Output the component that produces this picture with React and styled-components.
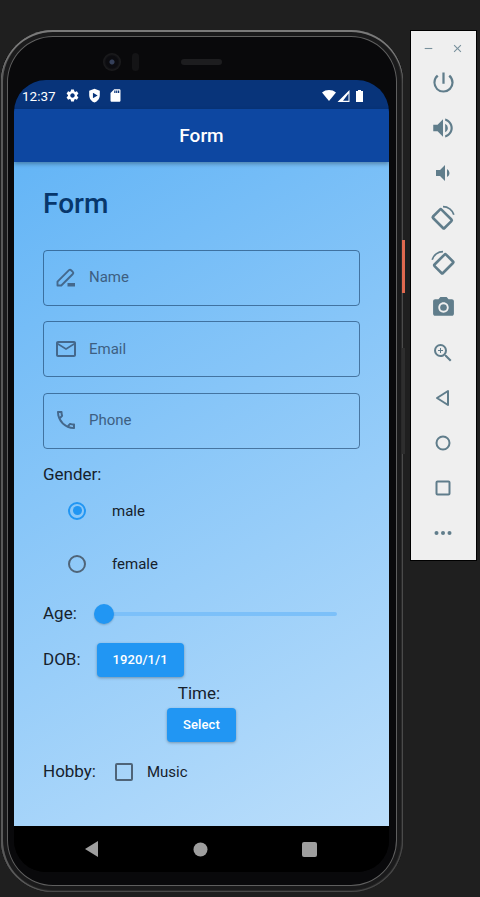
import React from 'react'
import styled, { createGlobalStyle } from 'styled-components'
import {
  MdSettings, MdSdCard, MdMailOutline, MdOutlinePhone,
  MdPowerSettingsNew, MdVolumeUp, MdVolumeDown,
  MdPhotoCamera, MdOutlineZoomIn, MdClose, MdRemove,
} from 'react-icons/md'

const Global = createGlobalStyle`
  html, body { margin: 0; padding: 0; background: #1f1f1f; }
  body { width: 480px; height: 897px; overflow: hidden; font-family: Roboto, sans-serif; }
  * { box-sizing: border-box; }
`

const Page = styled.div`
  display: flex;
  align-items: flex-start;
  width: 480px;
  height: 897px;
  padding: 30px 0 0 1px;
  background: #1f1f1f;
`

const Phone = styled.div`
  position: relative;
  display: flex;
  flex-direction: column;
  width: 402px;
  height: 862px;
  padding: 0 14px 0 13px;
  background: #09090b;
  border-radius: 52px;
  box-shadow:
    inset 0 2px 0 #7a7a7a,
    inset 2px 0 0 #5a5a5a,
    inset 0 0 0 1px #4a4a4a,
    inset 0 0 0 2px #2a2a2a,
    inset 0 0 0 6px #1a1a1b,
    inset 0 0 0 7px #5f5f5f;
`

const Key = styled.span`
  position: absolute;
  left: 401px;
  top: ${p => p.$top}px;
  width: 3px;
  height: ${p => p.$h}px;
  background: ${p => p.$color};
`

const TopBezel = styled.div`
  display: flex;
  align-items: center;
  flex: 0 0 50px;
  padding: 14px 0 0 89px;
`

const Lens = styled.div`
  width: 18px;
  height: 18px;
  border-radius: 50%;
  background: radial-gradient(circle, #35405a 0 2px, #0c0c10 3px 6px, #1a1a1c 8px);
`

const Sensor = styled.div`
  width: 7px;
  height: 18px;
  margin-left: 11px;
  border-radius: 4px;
  background: #141416;
`

const Speaker = styled.div`
  width: 41px;
  height: 6px;
  margin-left: 42px;
  border-radius: 3px;
  background: #1d1d1f;
`

const Screen = styled.div`
  display: flex;
  flex-direction: column;
  width: 375px;
  height: 792px;
  overflow: hidden;
  border-radius: 32px;
  background: #000;
`

const StatusBar = styled.div`
  display: flex;
  align-items: center;
  flex: 0 0 29px;
  padding: 2px 26px 0 8px;
  background: #08347a;
  color: #fff;
`

const Clock = styled.span`
  width: 43px;
  font-size: 13.5px;
`

const StatusIcons = styled.div`
  display: flex;
  align-items: center;
  gap: 6.5px;
  flex: 1;
`

const StatusRight = styled.div`
  display: flex;
  align-items: center;
  gap: 1px;
`

const BatteryGap = styled.span`
  display: flex;
  margin-left: 5px;
`

const AppBar = styled.div`
  display: flex;
  align-items: center;
  justify-content: center;
  flex: 0 0 53px;
  position: relative;
  z-index: 1;
  background: #0d47a1;
  color: #fff;
  font-size: 19px;
  font-weight: 500;
  box-shadow: 0 2px 4px rgba(0, 0, 0, 0.3);
`

const Body = styled.div`
  display: flex;
  flex-direction: column;
  flex: 0 0 664px;
  padding: 0 29px;
  background: linear-gradient(150deg, #64b5f6, #bbdefb);
`

const Heading = styled.h1`
  margin: 25px 0 28.9px;
  height: 34px;
  color: #07376c;
  font-size: 28px;
  line-height: 34px;
  font-weight: 500;
`

const Fields = styled.div`
  display: flex;
  flex-direction: column;
  gap: 15.5px;
`

const Field = styled.div`
  display: flex;
  align-items: center;
  height: 56px;
  padding: 0 0 1px 10px;
  border: 1px solid rgba(13, 50, 90, 0.55);
  border-radius: 4px;
  color: #3d5f82;
  font-size: 15px;
`

const FieldIcon = styled.span`
  display: flex;
  width: 35px;
  font-size: 24px;
  color: #44688c;
`

const Label = styled.div`
  color: #16212c;
  font-size: 17px;
  line-height: 19px;
`

const GenderLabel = styled(Label)`
  margin-top: 16px;
`

const TimeLabel = styled(Label)`
  margin-right: 5px;
`

const RadioRow = styled.div`
  display: flex;
  align-items: center;
  height: 53.5px;
  padding-left: 25px;
  color: #16212c;
  font-size: 15px;
`

const RadioMark = styled.span`
  display: flex;
  align-items: center;
  justify-content: center;
  width: 18px;
  height: 18px;
  margin-right: 26px;
  border: 2px solid ${p => (p.$on ? '#2196f3' : '#4f6478')};
  border-radius: 50%;
  &::after {
    content: '';
    display: ${p => (p.$on ? 'block' : 'none')};
    width: 9px;
    height: 9px;
    border-radius: 50%;
    background: #2196f3;
  }
`

const Row = styled.div`
  display: flex;
  align-items: center;
`

const AgeRow = styled(Row)`
  height: 22px;
  margin-top: 12px;
`

const Slider = styled.div`
  display: flex;
  align-items: center;
  width: 243px;
  height: 4px;
  margin-left: 17px;
  border-radius: 2px;
  background: #7cc0f9;
`

const Thumb = styled.span`
  width: 20px;
  height: 20px;
  border-radius: 50%;
  background: #2196f3;
  box-shadow: 0 1px 2px rgba(0, 0, 0, 0.2);
`

const Button = styled.div`
  display: flex;
  align-items: center;
  justify-content: center;
  width: ${p => p.$w}px;
  height: 34px;
  border-radius: 4px;
  background: #2196f3;
  color: #fff;
  font-size: 13px;
  font-weight: 500;
  letter-spacing: 0.1px;
  box-shadow: 0 1px 3px rgba(0, 0, 0, 0.3);
`

const DobRow = styled(Row)`
  margin-top: 18px;
  gap: 16px;
`

const TimeBlock = styled.div`
  display: flex;
  flex-direction: column;
  align-items: center;
  gap: 5px;
  margin-top: 7px;
`

const HobbyRow = styled(Row)`
  margin-top: 20px;
  height: 20px;
`

const Check = styled.span`
  width: 18px;
  height: 18px;
  margin: 0 14px 0 19px;
  border: 2px solid #4f6478;
  border-radius: 2px;
`

const Music = styled.span`
  color: #16212c;
  font-size: 15px;
`

const NavBar = styled.div`
  display: flex;
  align-items: center;
  flex: 0 0 46px;
  padding-left: 24px;
  background: #000;
`

const NavSlot = styled.span`
  display: flex;
  justify-content: center;
  width: 108.5px;
  color: #9e9e9e;
`

const Side = styled.div`
  display: flex;
  flex-direction: column;
  align-items: center;
  width: 65px;
  height: 529px;
  margin: 1px 0 0 8px;
  padding: 8px 1px 0 0;
  background: #efefef;
  color: #607d8b;
  box-shadow: 0 0 0 1px #000;
`

const WindowButtons = styled.div`
  display: flex;
  justify-content: space-between;
  align-items: center;
  width: 42px;
  height: 18px;
  font-size: 13px;
  color: #78909c;
`

const SideButton = styled.span`
  display: flex;
  align-items: center;
  justify-content: center;
  height: 45px;
  font-size: ${p => p.$size || 24}px;
`

const SideFirst = styled(SideButton)`
  margin-top: 3px;
`

const PencilIcon = () => (
  <svg width="24" height="24" viewBox="0 0 24 24">
    <path d="M3.500 20.500v-3.800L15 5.200a1.500 1.500 0 0 1 2.100 0l1.700 1.700a1.500 1.500 0 0 1 0 2.100L7.300 20.500z" fill="none" stroke="currentColor" strokeWidth="1.900" strokeLinejoin="round" />
    <rect x="13.500" y="18" width="7.500" height="3.500" fill="currentColor" />
  </svg>
)

const Rotate = ({ flip }) => (
  <svg width="26" height="26" viewBox="0 0 24 24" fill="none" stroke="currentColor" strokeWidth="2.4">
    <g transform={flip ? 'translate(24 0) scale(-1 1)' : undefined}>
      <rect x="4.5" y="6.5" width="15" height="11" rx="1" transform="rotate(45 12 12) translate(0 1)" />
      <path d="M12 1.5a10.5 10.5 0 0 1 10 7.5" strokeWidth="1.6" />
    </g>
  </svg>
)

const App = () => (
  <Page>
    <Global />
    <Phone>
      <Key $top={210} $h={53} $color="#e0694f" />
      <Key $top={318} $h={106} $color="#2e2e2e" />
      <TopBezel>
        <Lens />
        <Sensor />
        <Speaker />
      </TopBezel>
      <Screen>
        <StatusBar>
          <Clock>12:37</Clock>
          <StatusIcons>
            <MdSettings size={15} />
            <svg width="15" height="15" viewBox="0 0 24 24" fill="#fff">
              <path fillRule="evenodd" d="M12 1 3.500 4.500V11c0 5.500 3.600 10.500 8.500 12 4.900-1.500 8.500-6.500 8.500-12V4.500zM9.500 7.500v9l7.500-4.500z" />
            </svg>
            <MdSdCard size={15} />
          </StatusIcons>
          <StatusRight>
            <svg width="14" height="11" viewBox="0 0 14 11" fill="#fff"><path d="M7 11 0 2.500C2 .8 4.400 0 7 0s5 .8 7 2.500z" /></svg>
            <svg width="13" height="12" viewBox="0 0 13 12" fill="#fff">
              <path fillRule="evenodd" d="M12.500 0v12H.5zM11.500 3.500 6 10.800h5.500z" />
            </svg>
            <BatteryGap>
              <svg width="7" height="12" viewBox="0 0 7 12" fill="#fff"><path d="M2 0h3v1h2v11H0V1h2z" /></svg>
            </BatteryGap>
          </StatusRight>
        </StatusBar>
        <AppBar>Form</AppBar>
        <Body>
          <Heading>Form</Heading>
          <Fields>
            <Field><FieldIcon><PencilIcon /></FieldIcon>Name</Field>
            <Field><FieldIcon><MdMailOutline /></FieldIcon>Email</Field>
            <Field><FieldIcon><MdOutlinePhone /></FieldIcon>Phone</Field>
          </Fields>
          <GenderLabel>Gender:</GenderLabel>
          <RadioRow><RadioMark $on />male</RadioRow>
          <RadioRow><RadioMark />female</RadioRow>
          <AgeRow>
            <Label>Age:</Label>
            <Slider><Thumb /></Slider>
          </AgeRow>
          <DobRow>
            <Label>DOB:</Label>
            <Button $w={87}>1920/1/1</Button>
          </DobRow>
          <TimeBlock>
            <TimeLabel>Time:</TimeLabel>
            <Button $w={69}>Select</Button>
          </TimeBlock>
          <HobbyRow>
            <Label>Hobby:</Label>
            <Check />
            <Music>Music</Music>
          </HobbyRow>
        </Body>
        <NavBar>
          <NavSlot>
            <svg width="14" height="16" viewBox="0 0 14 16" fill="currentColor"><path d="M13 0v16L0 8z" /></svg>
          </NavSlot>
          <NavSlot>
            <svg width="15" height="15" viewBox="0 0 15 15" fill="currentColor"><circle cx="7.500" cy="7.500" r="7" /></svg>
          </NavSlot>
          <NavSlot>
            <svg width="15" height="15" viewBox="0 0 15 15" fill="currentColor"><rect width="15" height="15" rx="2" /></svg>
          </NavSlot>
        </NavBar>
      </Screen>
    </Phone>
    <Side>
      <WindowButtons><MdRemove /><MdClose /></WindowButtons>
      <SideFirst $size={27}><MdPowerSettingsNew /></SideFirst>
      <SideButton $size={26}><MdVolumeUp /></SideButton>
      <SideButton><MdVolumeDown /></SideButton>
      <SideButton><Rotate /></SideButton>
      <SideButton><Rotate flip /></SideButton>
      <SideButton $size={25}><MdPhotoCamera /></SideButton>
      <SideButton><MdOutlineZoomIn /></SideButton>
      <SideButton>
        <svg width="24" height="24" viewBox="0 0 24 24" fill="none" stroke="currentColor" strokeWidth="2"><path d="M17 5v14L6 12z" strokeLinejoin="round" /></svg>
      </SideButton>
      <SideButton>
        <svg width="24" height="24" viewBox="0 0 24 24" fill="none" stroke="currentColor" strokeWidth="2"><circle cx="12" cy="12" r="6.500" /></svg>
      </SideButton>
      <SideButton>
        <svg width="24" height="24" viewBox="0 0 24 24" fill="none" stroke="currentColor" strokeWidth="2"><rect x="5.500" y="5.500" width="13" height="13" rx="1" /></svg>
      </SideButton>
      <SideButton>
        <svg width="24" height="24" viewBox="0 0 24 24" fill="currentColor"><circle cx="5.500" cy="12" r="2" /><circle cx="12" cy="12" r="2" /><circle cx="18.500" cy="12" r="2" /></svg>
      </SideButton>
    </Side>
  </Page>
)

export default App
